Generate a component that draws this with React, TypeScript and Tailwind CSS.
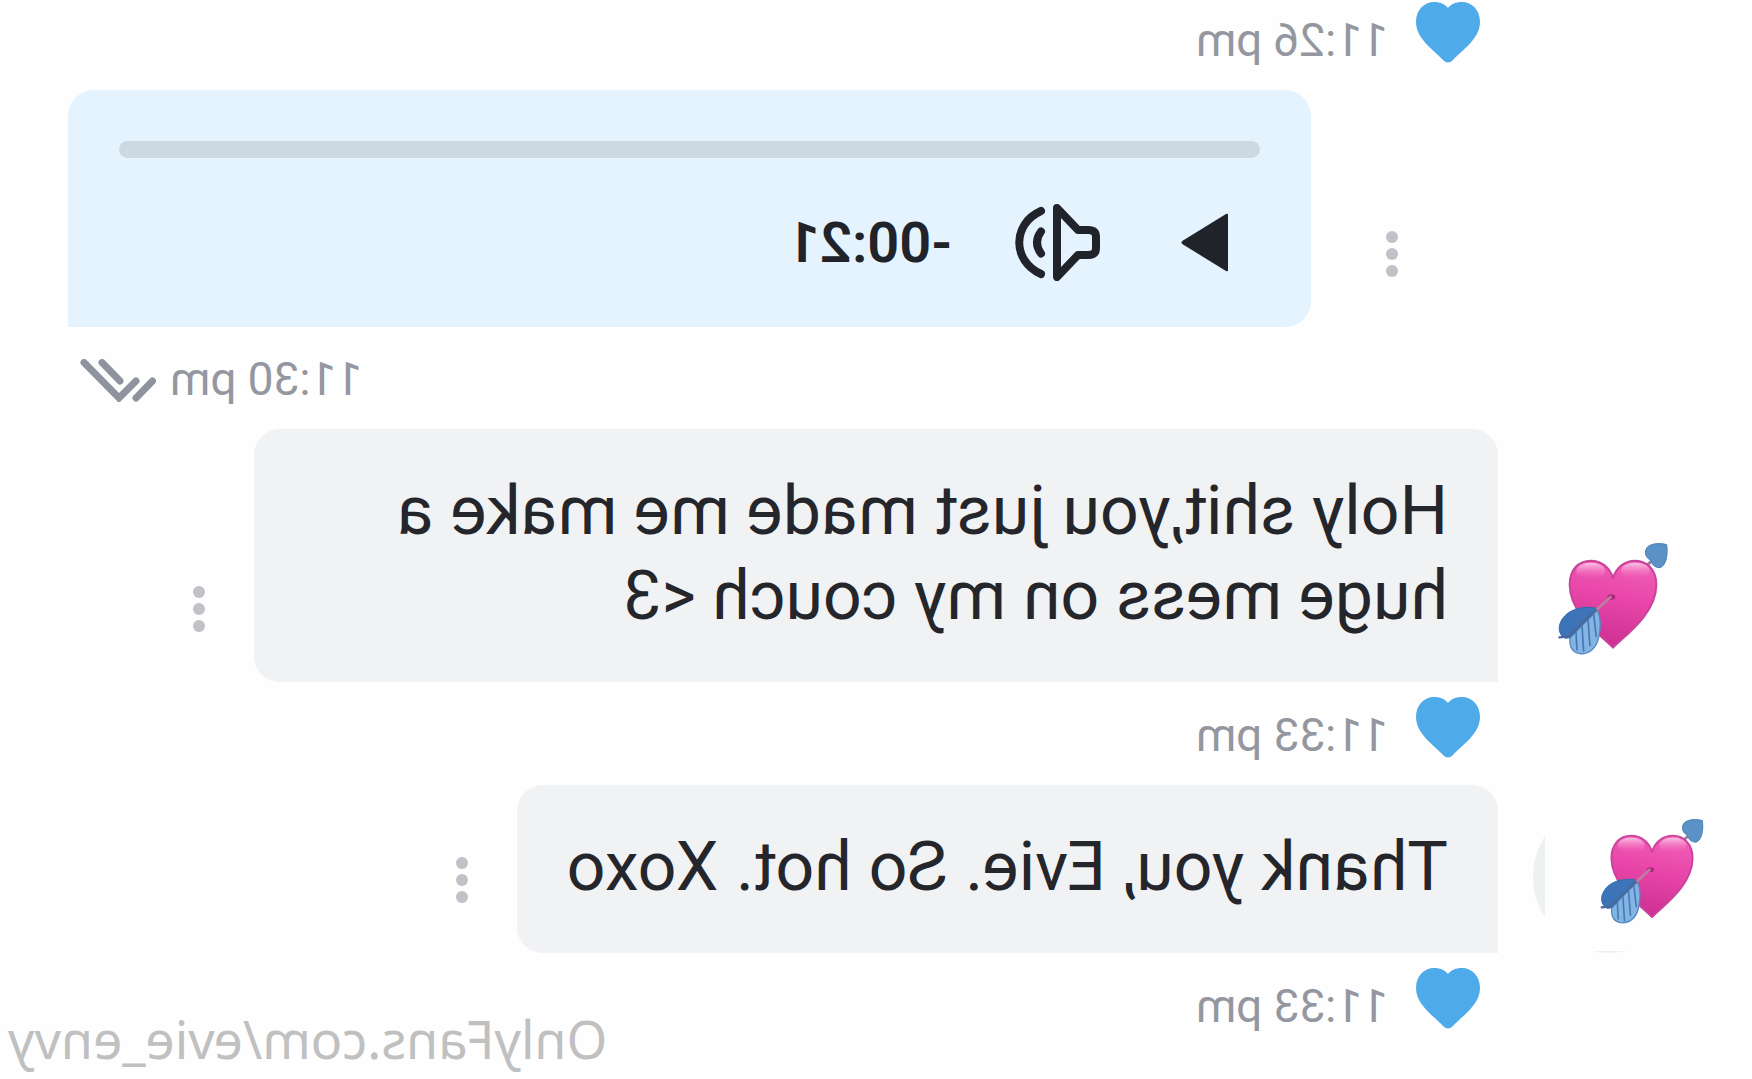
import React from "react";
import clsx from "clsx";

const BlueHeart = () => (
	<svg className="h-[61px] w-16 shrink-0" viewBox="0 0 64 61" aria-hidden="true">
		<path
			fill="#4faae9"
			d="M32 60.500Q29.500 60.500 27 58C18 48 0 37 0 20C0 8 8 0 18 0C24 0 29 2 32 6C35 2 40 0 46 0C56 0 64 8 64 20C64 37 46 48 37 58Q34.500 60.500 32 60.500Z"
		/>
	</svg>
);

const Ticks = () => (
	<svg
		className="h-[43px] w-[76px] shrink-0"
		viewBox="0 0 76 43"
		fill="none"
		stroke="#8f939d"
		strokeWidth="7"
		strokeLinecap="round"
		role="img"
		aria-label="Read"
	>
		<path d="M72 3.500L37 39L20 22M54 3.500L36 22M3.500 22L20 39" />
	</svg>
);

const CupidHeart = ({ id, className }: { id: string; className: string }) => (
	<svg className={className} viewBox="0 0 330 336" role="img" aria-label="Heart with arrow">
		<defs>
			<linearGradient id={`${id}-body`} x1="0.300" y1="0" x2="0.500" y2="1">
				<stop offset="0" stopColor="#f25fb8" />
				<stop offset="0.450" stopColor="#e845a8" />
				<stop offset="1" stopColor="#cc2f92" />
			</linearGradient>
			<linearGradient id={`${id}-shine`} x1="0" y1="0" x2="0" y2="1">
				<stop offset="0" stopColor="#fbc4e5" />
				<stop offset="1" stopColor="#f062b8" stopOpacity="0" />
			</linearGradient>
		</defs>
		<path d="M42 48L78 80" stroke="#9a7f9c" strokeWidth="9" />
		<path
			fill={`url(#${id}-body)`}
			stroke="#c9439b"
			strokeWidth="6"
			strokeLinejoin="round"
			d="M165 314C135 282 35 215 35 125C35 80 64 53 98 53C130 53 155 73 165 105C175 73 200 53 232 53C268 53 295 80 295 125C295 215 195 282 165 314Z"
		/>
		<ellipse cx="98" cy="84" rx="43" ry="25" fill={`url(#${id}-shine)`} />
		<ellipse cx="232" cy="84" rx="43" ry="25" fill={`url(#${id}-shine)`} />
		<path
			fill="#5a92c8"
			stroke="#4a80b4"
			strokeWidth="3"
			d="M4 5C24 -1 62 0 67 22C70 38 62 46 52 52C48 63 42 74 24 74C4 68 0 30 4 5Z"
		/>
		<ellipse cx="170" cy="162" rx="12" ry="8" fill="#ad2678" />
		<path
			fill="#83b4e4"
			stroke="#5588bf"
			strokeWidth="4"
			d="M212 200C200 228 202 258 208 284C216 320 240 334 265 332C290 328 296 306 294 284Z"
		/>
		<path d="M223 214L215 282M240 230L234 310M258 248L253 326M276 266L273 322" stroke="#4478b4" strokeWidth="5" />
		<path
			fill="#3d74b8"
			stroke="#326aae"
			strokeWidth="3"
			d="M214 196C260 186 312 202 325 245C329 262 324 278 308 286L294 284Z"
		/>
		<path d="M170 160L218 204" stroke="#b9809f" strokeWidth="8" />
		<path d="M216 202L300 280L326 283" fill="none" stroke="#48699a" strokeWidth="7" strokeLinecap="round" />
	</svg>
);

const VolumeIcon = () => (
	<svg
		className="h-[77px] w-[85px]"
		viewBox="0 0 85 77"
		fill="none"
		stroke="#202329"
		strokeWidth="8"
		strokeLinecap="round"
		strokeLinejoin="round"
	>
		<path d="M22 26H12Q4 26 4 33V44Q4 51 12 51H22L43 73V4Z" />
		<path d="M59 27.500Q67 38.500 59 49.500M59 7C88 20 88 57 59 70" />
	</svg>
);

const MenuButton = ({ className }: { className?: string }) => (
	<button type="button" aria-label="More" className={clsx("mb-[50px] h-[46px] w-3 shrink-0", className)}>
		<svg className="block h-[46px] w-3" viewBox="0 0 12 46" fill="#c1c1c7">
			<circle cx="6" cy="6" r="6" />
			<circle cx="6" cy="23" r="6" />
			<circle cx="6" cy="40" r="6" />
		</svg>
	</button>
);

const Liked = ({ time, first }: { time: string; first?: boolean }) => (
	<div
		className={clsx("flex items-end gap-7 pb-[27px] pl-[272px]", {
			"h-[90px]": first,
			"h-[103px]": !first,
		})}
	>
		<BlueHeart />
		<time className="text-[46px] leading-[46px] text-[#94979f]">{time}</time>
	</div>
);

type MessageProps = {
	text: string;
	children?: React.ReactNode;
};

const Message = ({ text, children }: MessageProps) => (
	<div className="flex items-end">
		<div className="flex w-[254px] shrink-0 self-stretch">{children}</div>
		<p className="max-w-[71%] rounded-[26px] rounded-bl-none bg-[#f1f2f4] px-[50px] pt-10 pb-[43px] text-[68px] leading-[85px] text-[#24262b]">
			{text}
		</p>
		<MenuButton className="ml-[49px]" />
	</div>
);

const AudioMessage = () => (
	<div className="flex items-end justify-end pr-[68px]">
		<MenuButton className="mr-[75px]" />
		<div className="w-[73.8%] rounded-[26px] rounded-br-none bg-[#e4f3fd] px-[51px] pt-[51px] pb-[46px]">
			<input
				type="range"
				defaultValue={0}
				aria-label="Position"
				className="block h-[17px] w-full appearance-none rounded-full bg-[#ccd9e2] [&::-webkit-slider-thumb]:h-0 [&::-webkit-slider-thumb]:w-0 [&::-webkit-slider-thumb]:appearance-none"
			/>
			<div className="mt-[46px] flex h-[77px] items-center pl-8">
				<button type="button" aria-label="Play">
					<svg className="block h-[59px] w-[47px]" viewBox="0 0 47 59" fill="#202329">
						<path d="M0 2Q0 0 2 1L45 27.500Q48 29.500 45 31.500L2 58Q0 59 0 57Z" />
					</svg>
				</button>
				<button type="button" aria-label="Volume" className="ml-[81px]">
					<VolumeIcon />
				</button>
				<span className="ml-[63px] text-[56px] leading-[56px] font-semibold text-[#202329]">-00:21</span>
			</div>
		</div>
	</div>
);

export default function App() {
	return (
		<main className="relative min-h-screen -scale-x-100 overflow-hidden bg-[#fefefe] font-['Roboto',sans-serif]">
			<Liked time="11:26 pm" first />
			<AudioMessage />
			<div className="flex h-[102px] items-end justify-end gap-[14px] pr-20 pb-[27px]">
				<time className="text-[46px] leading-[46px] text-[#94979f]">11:30 pm</time>
				<Ticks />
			</div>
			<Message text="Holy shit,you just made me make a huge mess on my couch <3">
				<div className="flex h-full items-end pb-[27px] pl-[84px]">
					<CupidHeart id="first" className="h-[112px] w-[110px]" />
				</div>
			</Message>
			<Liked time="11:33 pm" />
			<Message text="Thank you, Evie. So hot. Xoxo">
				<div className="mt-4 ml-[67px] h-[152px] w-[152px] rounded-full bg-[#eef1f1]">
					<div className="-ml-6 flex h-[150px] w-[164px] items-end bg-[#fefefe] pb-[27px] pl-[5px]">
						<CupidHeart id="second" className="h-[105px] w-[104px]" />
					</div>
				</div>
			</Message>
			<Liked time="11:33 pm" />
			<a
				href="#"
				className="absolute right-2 bottom-0 font-['Noto_Sans',sans-serif] text-[52px] leading-[80px] text-[#c0c0c0]"
			>
				OnlyFans.com/evie_envy
			</a>
		</main>
	);
}
